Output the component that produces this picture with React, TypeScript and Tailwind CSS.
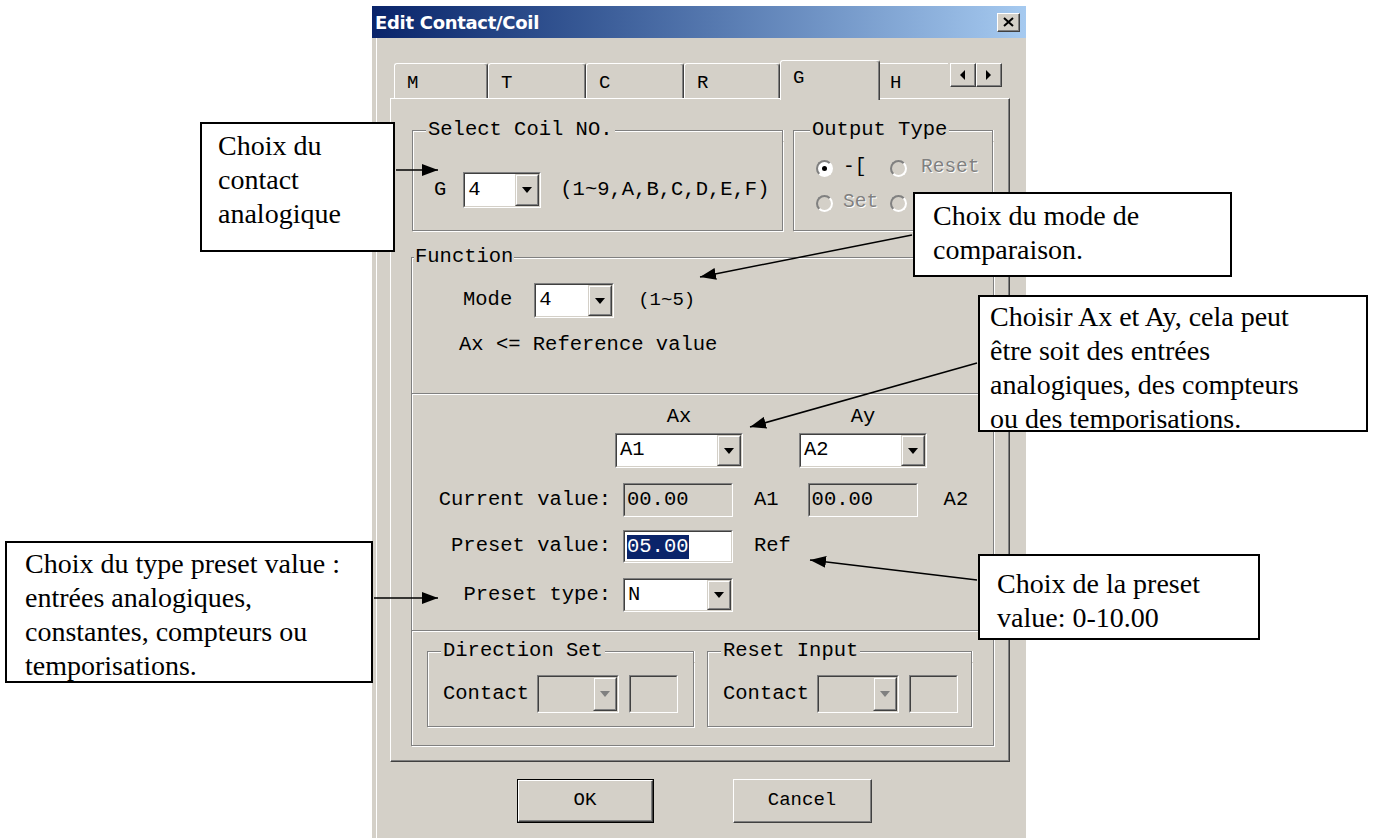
import React from "react";

// Win2000-style "Edit Contact/Coil" dialog with annotation callouts

type Kids = { children?: React.ReactNode };

function Sunken({ className = "", inner = "", children }: { className?: string; inner?: string } & Kids) {
  return (
    <div className={"flex border border-t-[#808080] border-l-[#808080] border-r-white border-b-white " + className}>
      <div className={"flex flex-1 min-w-0 border border-t-[#404040] border-l-[#404040] border-r-[#d4d0c8] border-b-[#d4d0c8] " + inner}>
        {children}
      </div>
    </div>
  );
}

function DropButton({ disabled }: { disabled?: boolean }) {
  return (
    <div className="w-[24px] flex border border-t-[#d4d0c8] border-l-[#d4d0c8] border-r-[#404040] border-b-[#404040]">
      <div className="flex-1 flex items-center justify-center border border-t-white border-l-white border-r-[#808080] border-b-[#808080] bg-[#d4d0c8]">
        <span
          className={
            "w-0 h-0 border-x-[5px] border-x-transparent border-t-[6px] " +
            (disabled ? "border-t-[#808080]" : "border-t-black")
          }
        />
      </div>
    </div>
  );
}

function Combo({ value, className = "", disabled }: { value?: string; className?: string; disabled?: boolean }) {
  return (
    <Sunken className={className} inner={disabled ? "bg-[#d4d0c8]" : "bg-white"}>
      <span className="flex-1 pl-[3px] flex items-center">{value}</span>
      <DropButton disabled={disabled} />
    </Sunken>
  );
}

function Group({
  label,
  className = "",
  corner,
  labelClass = "px-[2px]",
  children,
}: { label: string; className?: string; corner: string; labelClass?: string } & Kids) {
  return (
    <div className={"flex flex-col " + className}>
      <div className="flex h-[22px] shrink-0">
        <div className={"mt-[11px] border-t border-l border-[#808080] shadow-[inset_1px_1px_0_#fff] " + corner} />
        <span className={"leading-[22px] whitespace-nowrap " + labelClass}>{label}</span>
        <div className="flex-1 mt-[11px] border-t border-r border-[#808080] shadow-[inset_0_1px_0_#fff,1px_0_0_#fff]" />
      </div>
      <div className="flex-1 border-l border-r border-b border-[#808080] shadow-[inset_1px_0_0_#fff,1px_1px_0_#fff]">
        {children}
      </div>
    </div>
  );
}

function Radio({ checked, disabled }: { checked?: boolean; disabled?: boolean }) {
  return (
    <span
      className={
        "w-[17px] h-[17px] shrink-0 rounded-full flex items-center justify-center border-2 border-t-[#808080] border-l-[#808080] border-r-white border-b-white " +
        (disabled ? "bg-[#d4d0c8]" : "bg-white")
      }
    >
      {checked && <span className="w-[5px] h-[5px] rounded-full bg-black" />}
    </span>
  );
}

function Etched() {
  return <div className="h-[2px] border-t border-[#808080] bg-white shrink-0" />;
}

function Tab({ label, className = "" }: { label: string; className?: string }) {
  return (
    <div
      className={
        "h-[35px] pl-[12px] pt-[8px] leading-[22px] border-t border-l border-white border-r border-r-[#404040] shadow-[inset_-1px_0_0_#808080] rounded-t-[3px] " +
        className
      }
    >
      {label}
    </div>
  );
}

function ArrowBtn({ dir }: { dir: "left" | "right" }) {
  return (
    <div className="w-[26px] h-[24px] flex border border-t-white border-l-white border-r-[#404040] border-b-[#404040]">
      <div className="flex-1 flex items-center justify-center border-r border-b border-[#808080]">
        {dir === "left" ? (
          <span className="w-0 h-0 border-y-[5px] border-y-transparent border-r-[5px] border-r-black" />
        ) : (
          <span className="w-0 h-0 border-y-[5px] border-y-transparent border-l-[5px] border-l-black" />
        )}
      </div>
    </div>
  );
}

function PushButton({ label, isDefault, className = "" }: { label: string; isDefault?: boolean; className?: string }) {
  return (
    <div className={"flex " + (isDefault ? "border border-black " : "") + className}>
      <div className="flex-1 flex border border-t-white border-l-white border-r-[#404040] border-b-[#404040]">
        <div className="flex-1 flex items-center justify-center border-r border-b border-[#808080]">{label}</div>
      </div>
    </div>
  );
}

function Note({ className, children }: { className: string } & Kids) {
  return (
    <div
      className={
        "absolute bg-white border-2 border-black font-['Liberation_Serif','Times_New_Roman',serif] text-[28px] leading-[34px] text-black overflow-hidden whitespace-nowrap " +
        className
      }
    >
      {children}
    </div>
  );
}

const disabledText = "text-[#808080] [text-shadow:1px_1px_0_#fff]";

export default function App() {
  return (
    <div className="relative w-[1375px] h-[838px] overflow-hidden bg-white">
      <div className="ml-[372px] pt-[6px]">
        <div className="w-[654px] h-[832px] bg-[#d4d0c8] shadow-[inset_4px_0_0_#d4d0c8,inset_5px_0_0_#fff] flex flex-col text-black font-['Liberation_Mono','DejaVu_Sans_Mono',monospace] text-[20.5px]">
          {/* title bar */}
          <div className="h-[32px] shrink-0 flex items-center justify-between pl-[3px] pr-[6px] bg-linear-to-r from-[#0a246a] to-[#a6caf0]">
            <span className="text-white font-bold text-[18px] font-['DejaVu_Sans',sans-serif] tracking-[-0.3px]">
              Edit Contact/Coil
            </span>
            <div className="w-[23px] h-[19px] flex border border-t-white border-l-white border-r-[#404040] border-b-[#404040] bg-[#d4d0c8]">
              <div className="flex-1 flex items-center justify-center border-r border-b border-[#808080]">
                <svg width="11" height="10" viewBox="0 0 11 10">
                  <path d="M1 1 L10 9 M10 1 L1 9" stroke="black" strokeWidth="2" />
                </svg>
              </div>
            </div>
          </div>

          {/* tabs */}
          <div className="mt-[22px] ml-[22px] h-[38px] flex items-end text-[19px]">
            <Tab label="M" className="w-[94px]" />
            <Tab label="T" className="w-[98px]" />
            <Tab label="C" className="w-[98px]" />
            <Tab label="R" className="w-[96px]" />
            <div className="relative z-10 w-[100px] h-[40px] -mb-[2px] pl-[12px] pt-[6px] leading-[22px] bg-[#d4d0c8] border-t border-l border-white border-r border-r-[#404040] shadow-[inset_-1px_0_0_#808080] rounded-t-[3px]">
              G
            </div>
            <div className="w-[68px] h-[35px] pl-[10px] pt-[8px] leading-[22px] border-t border-white">H</div>
            <div className="ml-[2px] mb-[11px] flex">
              <ArrowBtn dir="left" />
              <ArrowBtn dir="right" />
            </div>
          </div>

          {/* tab panel */}
          <div className="ml-[18px] w-[620px] h-[664px] shrink-0 border-t border-l border-white border-r border-b border-r-[#404040] border-b-[#404040] shadow-[inset_-1px_-1px_0_#808080]">
            <div className="flex mt-[20px] ml-[21px] gap-[10px] h-[112px]">
              <Group label="Select Coil NO." className="w-[371px]" corner="w-[14px]">
                <div className="flex items-center mt-[31px] pl-[21px]">
                  <span>G</span>
                  <Combo value="4" className="ml-[17px] w-[78px] h-[36px]" />
                  <span className="ml-[19px]">(1~9,A,B,C,D,E,F)</span>
                </div>
              </Group>
              <Group label="Output Type" className="w-[200px]" corner="w-[17px]">
                <div className="grid grid-cols-[74px_auto] gap-y-[11px] mt-[15px] pl-[22px] text-[19.5px]">
                  <div className="flex items-center gap-[10px] h-[24px]">
                    <Radio checked />
                    <span>-[</span>
                  </div>
                  <div className="flex items-center gap-[14px] h-[24px]">
                    <Radio disabled />
                    <span className={disabledText}>Reset</span>
                  </div>
                  <div className="flex items-center gap-[10px] h-[24px]">
                    <Radio disabled />
                    <span className={disabledText}>Set</span>
                  </div>
                  <div className="flex items-center h-[24px]">
                    <Radio disabled />
                  </div>
                </div>
              </Group>
            </div>

            <Group
              label="Function"
              className="mt-[15px] ml-[20px] w-[583px] h-[500px]"
              corner="w-[3px]"
              labelClass="px-[1px]"
            >
              <div className="flex flex-col h-full">
                {/* function section */}
                <div className="h-[125px] shrink-0">
                  <div className="flex items-center mt-[15px] pl-[51px]">
                    <span>Mode</span>
                    <Combo value="4" className="ml-[22px] w-[80px] h-[35px]" />
                    <span className="ml-[24px] text-[19px]">(1~5)</span>
                  </div>
                  <div className="mt-[15px] pl-[47px] leading-[24px]">Ax &lt;= Reference value</div>
                </div>
                <Etched />

                {/* Ax / Ay section */}
                <div className="h-[235px] shrink-0">
                  <div className="flex mt-[10px] pl-[203px] leading-[24px]">
                    <div className="w-[128px] text-center">Ax</div>
                    <div className="ml-[56px] w-[128px] text-center">Ay</div>
                  </div>
                  <div className="flex mt-[4px] pl-[203px]">
                    <Combo value="A1" className="w-[128px] h-[35px]" />
                    <Combo value="A2" className="ml-[56px] w-[128px] h-[35px]" />
                  </div>
                  <div className="flex items-center mt-[15px] h-[34px]">
                    <span className="w-[199px] text-right whitespace-nowrap">Current value:</span>
                    <Sunken className="ml-[12px] w-[110px] h-[34px]" inner="bg-[#d4d0c8] items-center pl-[2px]">
                      00.00
                    </Sunken>
                    <span className="ml-[21px]">A1</span>
                    <Sunken className="ml-[29px] w-[110px] h-[34px]" inner="bg-[#d4d0c8] items-center pl-[2px]">
                      00.00
                    </Sunken>
                    <span className="ml-[26px]">A2</span>
                  </div>
                  <div className="flex items-center mt-[13px] h-[33px]">
                    <span className="w-[199px] text-right whitespace-nowrap">Preset value:</span>
                    <Sunken className="ml-[12px] w-[110px] h-[33px]" inner="bg-white items-center pl-[2px]">
                      <span className="bg-[#0a246a] text-white leading-[24px]">05.00</span>
                    </Sunken>
                    <span className="ml-[21px]">Ref</span>
                  </div>
                  <div className="flex items-center mt-[15px] h-[34px]">
                    <span className="w-[199px] text-right whitespace-nowrap">Preset type:</span>
                    <Combo value="N" className="ml-[12px] w-[110px] h-[34px]" />
                  </div>
                </div>
                <Etched />

                {/* direction / reset section */}
                <div className="flex mt-[8px] pl-[15px] gap-[13px]">
                  <Group label="Direction Set" className="w-[267px] h-[87px]" corner="w-[14px]">
                    <div className="flex items-center mt-[13px] pl-[15px]">
                      <span>Contact</span>
                      <Combo disabled className="ml-[8px] w-[82px] h-[38px]" />
                      <Sunken className="ml-[10px] w-[49px] h-[38px]" inner="bg-[#d4d0c8]" />
                    </div>
                  </Group>
                  <Group label="Reset Input" className="w-[265px] h-[87px]" corner="w-[14px]">
                    <div className="flex items-center mt-[13px] pl-[15px]">
                      <span>Contact</span>
                      <Combo disabled className="ml-[8px] w-[82px] h-[38px]" />
                      <Sunken className="ml-[10px] w-[49px] h-[38px]" inner="bg-[#d4d0c8]" />
                    </div>
                  </Group>
                </div>
              </div>
            </Group>
          </div>

          {/* buttons */}
          <div className="flex mt-[17px] text-[19px]">
            <PushButton label="OK" isDefault className="ml-[145px] w-[137px] h-[44px]" />
            <PushButton label="Cancel" className="ml-[79px] w-[139px] h-[44px]" />
          </div>
        </div>
      </div>

      {/* callouts */}
      <Note className="left-[200px] top-[122px] w-[195px] h-[130px] pl-[16px] pt-[5px]">
        Choix du
        <br />
        contact
        <br />
        analogique
      </Note>
      <Note className="left-[913px] top-[192px] w-[319px] h-[85px] pl-[18px] pt-[5px]">
        Choix du mode de
        <br />
        comparaison.
      </Note>
      <Note className="left-[978px] top-[295px] w-[390px] h-[137px] pl-[10px] pt-[3px]">
        Choisir Ax et Ay, cela peut
        <br />
        être soit des entrées
        <br />
        analogiques, des compteurs
        <br />
        ou des temporisations.
      </Note>
      <Note className="left-[5px] top-[541px] w-[368px] h-[142px] pl-[18px] pt-[4px]">
        Choix du type preset value :
        <br />
        entrées analogiques,
        <br />
        constantes, compteurs ou
        <br />
        temporisations.
      </Note>
      <Note className="left-[978px] top-[554px] w-[282px] h-[86px] pl-[17px] pt-[11px] leading-[31px]">
        Choix de la preset
        <br />
        value: 0-10.00
      </Note>

      {/* arrows */}
      <svg className="absolute inset-0 pointer-events-none" width="1375" height="838">
        <defs>
          <marker
            id="head"
            markerWidth="16"
            markerHeight="12"
            refX="16"
            refY="6"
            orient="auto"
            markerUnits="userSpaceOnUse"
          >
            <path d="M0 0 L16 6 L0 12 Z" fill="black" />
          </marker>
        </defs>
        <g stroke="black" strokeWidth="1.5" fill="none">
          <line x1="396" y1="170" x2="438" y2="170" markerEnd="url(#head)" />
          <line x1="912" y1="235" x2="700" y2="277" markerEnd="url(#head)" />
          <line x1="977" y1="363" x2="750" y2="427" markerEnd="url(#head)" />
          <line x1="374" y1="598" x2="438" y2="598" markerEnd="url(#head)" />
          <line x1="977" y1="580" x2="810" y2="560" markerEnd="url(#head)" />
        </g>
      </svg>
    </div>
  );
}
